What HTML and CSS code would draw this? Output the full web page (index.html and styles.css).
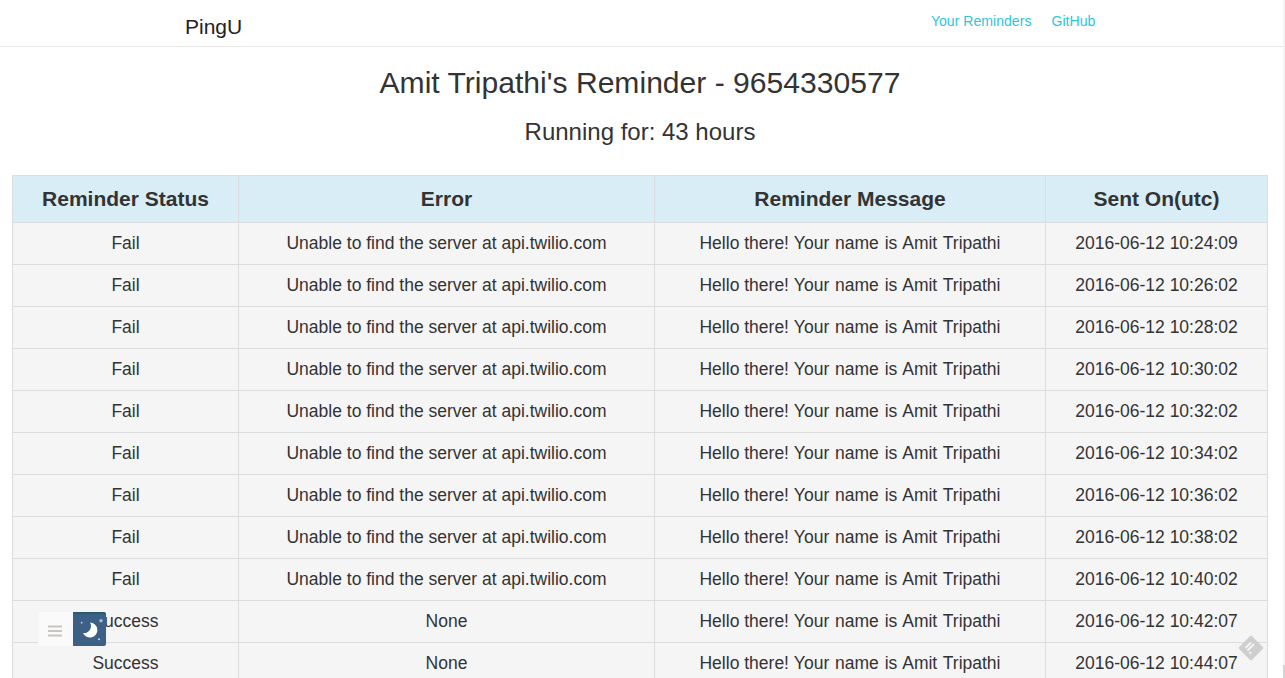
FILE: index.html
```html
<!DOCTYPE html>
<html lang="en">
<head>
<meta charset="utf-8">
<title>PingU</title>
<link rel="stylesheet" href="styles.css">
</head>
<body>
<nav class="navbar">
  <a class="brand" href="#">PingU</a>
  <ul class="nav-links">
    <li><a href="#">Your Reminders</a></li>
    <li><a href="#">GitHub</a></li>
  </ul>
</nav>
<main class="content">
  <h1 class="title">Amit Tripathi's Reminder - 9654330577</h1>
  <h3 class="subtitle">Running for: 43 hours</h3>
  <table class="reminders">
    <colgroup><col class="c1"><col class="c2"><col class="c3"><col class="c4"></colgroup>
    <thead>
      <tr><th>Reminder Status</th><th>Error</th><th>Reminder Message</th><th>Sent On(utc)</th></tr>
    </thead>
    <tbody>
      <tr><td>Fail</td><td>Unable to find the server at api.twilio.com</td><td>Hello there! <span class="msg-name">Your name is Amit Tripathi</span></td><td>2016-06-12 10:24:09</td></tr>
      <tr><td>Fail</td><td>Unable to find the server at api.twilio.com</td><td>Hello there! <span class="msg-name">Your name is Amit Tripathi</span></td><td>2016-06-12 10:26:02</td></tr>
      <tr><td>Fail</td><td>Unable to find the server at api.twilio.com</td><td>Hello there! <span class="msg-name">Your name is Amit Tripathi</span></td><td>2016-06-12 10:28:02</td></tr>
      <tr><td>Fail</td><td>Unable to find the server at api.twilio.com</td><td>Hello there! <span class="msg-name">Your name is Amit Tripathi</span></td><td>2016-06-12 10:30:02</td></tr>
      <tr><td>Fail</td><td>Unable to find the server at api.twilio.com</td><td>Hello there! <span class="msg-name">Your name is Amit Tripathi</span></td><td>2016-06-12 10:32:02</td></tr>
      <tr><td>Fail</td><td>Unable to find the server at api.twilio.com</td><td>Hello there! <span class="msg-name">Your name is Amit Tripathi</span></td><td>2016-06-12 10:34:02</td></tr>
      <tr><td>Fail</td><td>Unable to find the server at api.twilio.com</td><td>Hello there! <span class="msg-name">Your name is Amit Tripathi</span></td><td>2016-06-12 10:36:02</td></tr>
      <tr><td>Fail</td><td>Unable to find the server at api.twilio.com</td><td>Hello there! <span class="msg-name">Your name is Amit Tripathi</span></td><td>2016-06-12 10:38:02</td></tr>
      <tr><td>Fail</td><td>Unable to find the server at api.twilio.com</td><td>Hello there! <span class="msg-name">Your name is Amit Tripathi</span></td><td>2016-06-12 10:40:02</td></tr>
      <tr><td>Success</td><td>None</td><td>Hello there! <span class="msg-name">Your name is Amit Tripathi</span></td><td>2016-06-12 10:42:07</td></tr>
      <tr><td>Success</td><td>None</td><td>Hello there! <span class="msg-name">Your name is Amit Tripathi</span></td><td>2016-06-12 10:44:07</td></tr>
    </tbody>
  </table>
</main>
<div class="widget">
  <span class="widget-menu">
    <svg width="14" height="12" viewBox="0 0 14 12"><path d="M0 1.500h14M0 6h14M0 10.500h14" stroke="#c9c4c0" stroke-width="2" fill="none"/></svg>
  </span>
  <span class="widget-moon">
    <svg width="33" height="34" viewBox="0 0 33 34">
      <rect width="33" height="34" fill="#3d6087"/>
      <rect width="33" height="2" fill="#2d5a68"/>
      <path d="M17 10.500A7.500 7.500 0 1 1 10 21A7 7 0 0 0 17 10.500z" fill="#fff"/>
      <circle cx="28" cy="8.700" r="1.800" fill="#a9bacb"/>
      <circle cx="8.700" cy="10.700" r="0.900" fill="#c9d5e0"/>
      <circle cx="26" cy="27.300" r="1" fill="#d5dee7"/>
    </svg>
  </span>
</div>
<svg class="corner-badge" width="26" height="26" viewBox="0 0 26 26">
  <path d="M13 2L24 13L13 24L2 13z" fill="#cfcfcf" stroke="#cfcfcf" stroke-width="2.500" stroke-linejoin="round"/>
  <path d="M7.500 13L13 7.500M9.500 15.500L16 9M11.500 18.500l1.500-1.500" stroke="#f4f4f4" stroke-width="2" fill="none"/>
</svg>
<div class="edge"><div class="edge-thumb"></div></div>
</body>
</html>
```
FILE: styles.css
```css
* { box-sizing: border-box; }
html, body { height: 100%; }
body {
  margin: 0;
  overflow: hidden;
  background: #fff;
  color: #333;
  font-family: "Liberation Sans", Arial, sans-serif;
  font-size: 17.5px;
}
.navbar {
  height: 47px;
  display: flex;
  justify-content: space-between;
  padding: 0 189.7px 0 185px;
  border-bottom: 1px solid #e7e7e7;
}
.brand {
  font-size: 21px;
  line-height: 54px;
  color: #222;
  text-decoration: none;
}
.nav-links {
  display: flex;
  gap: 20px;
  margin: 0;
  padding: 0;
  list-style: none;
  font-size: 14.1px;
  line-height: 42px;
}
.nav-links a { color: #31c5d8; text-decoration: none; }
.content { padding: 0 17px 0 12px; }
.title {
  margin: 19px 0 0;
  font-size: 30.1px;
  font-weight: 400;
  line-height: 33px;
  text-align: center;
}
.subtitle {
  margin: 20px 0 0;
  font-size: 24px;
  font-weight: 400;
  line-height: 26px;
  text-align: center;
}
.reminders {
  width: 1255px;
  margin-top: 30px;
  table-layout: fixed;
  border-collapse: collapse;
  background: #f5f5f5;
  border: 1px solid #ddd;
}
.c1 { width: 226px; }
.c2 { width: 416px; }
.c3 { width: 391px; }
.c4 { width: 222px; }
.reminders th, .reminders td {
  border: 1px solid #ddd;
  text-align: center;
}
.reminders th {
  height: 47px;
  background: #d9edf7;
  font-size: 21px;
  font-weight: 700;
}
.reminders td { height: 42px; padding: 0 8px; }
.msg-name { word-spacing: 1px; }
.widget {
  position: absolute;
  left: 38px;
  top: 612px;
  display: flex;
  width: 68px;
  height: 34px;
  border-radius: 3px;
  overflow: hidden;
  box-shadow: 0 0 1px rgba(0, 0, 0, 0.06);
}
.widget-menu {
  width: 35px;
  display: flex;
  align-items: center;
  justify-content: center;
  padding: 3px 1px 0 0;
  background: #fafafa;
}
.widget-moon { width: 33px; height: 34px; background: #3d6087; }
.corner-badge { position: absolute; left: 1238px; top: 635px; }
.edge {
  position: absolute;
  right: 0;
  top: 0;
  bottom: 0;
  width: 2px;
  background: #f4f4f4;
}
.edge-thumb {
  position: absolute;
  left: 0;
  right: 0;
  top: 665px;
  bottom: 0;
  background: #d4d4d4;
}
```
